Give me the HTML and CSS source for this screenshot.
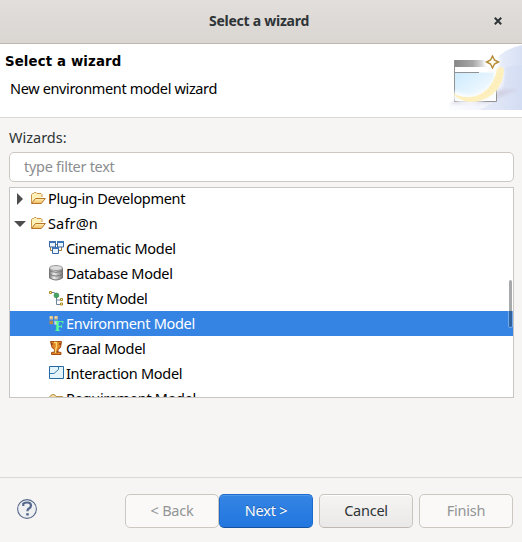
FILE: index.html
```html
<!DOCTYPE html>
<html lang="en">
<head>
<meta charset="utf-8">
<title>Select a wizard</title>
<link rel="stylesheet" href="styles.css">
</head>
<body>
<svg width="0" height="0" class="defs" aria-hidden="true">
  <defs>
    <linearGradient id="gold" x2="0" y2="1"><stop stop-color="#fff3bd"/><stop offset="1" stop-color="#efb957"/></linearGradient>
    <linearGradient id="metal"><stop stop-color="#777"/><stop offset=".35" stop-color="#eee"/><stop offset="1" stop-color="#777"/></linearGradient>
    <linearGradient id="sky" x2="1" y2="1"><stop stop-color="#cceafd"/><stop offset="1" stop-color="#fff"/></linearGradient>
    <symbol id="folder" viewBox="0 0 16 16"><path d="M1.500 13V4.500l1-1h1l1-1H6l1 1h4l1 1v2.500" fill="#fff0b8" stroke="#c9934a"/><path d="M1.500 13.500 5.500 8.500h9.800l-4 5z" fill="url(#gold)" stroke="#b8752a"/></symbol>
  </defs>
</svg>
<div class="window">
  <header class="titlebar"><span class="title">Select a wizard</span>
    <svg class="close" viewBox="0 0 8 8"><path d="M.8.8l6.400 6.400M7.200.8.8 7.200" stroke="#2e3436" stroke-width="2"/></svg>
  </header>
  <section class="banner">
    <div class="banner-text"><h1>Select a wizard</h1><p>New environment model wizard</p></div>
    <svg class="art" viewBox="0 0 75 66">
      <defs>
        <linearGradient id="swoop"><stop stop-color="#fbfcff"/><stop offset=".5" stop-color="#f1f4fc"/><stop offset="1" stop-color="#d6dff4"/></linearGradient>
        <linearGradient id="bar"><stop stop-color="#868686"/><stop offset=".55" stop-color="#a8a8a8"/><stop offset="1" stop-color="#fff"/></linearGradient>
        <filter id="soft" x="-30%" y="-30%" width="160%" height="160%"><feGaussianBlur stdDeviation="1.500"/></filter>
      </defs>
      <path d="M0 58 44 53V19Q54 4 75 1V66H0z" fill="url(#swoop)"/>
      <path d="M54 25Q62 20 75 22V66H30Q62 53 54 25" fill="#ccd8f2" opacity=".35"/>
      <path d="M1 60 8 56 48 46 69 45 38 59z" fill="#cdc9dd" opacity=".7" filter="url(#soft)"/>
      <path d="M5.500 16.500H47.500V57.500H5.500z" fill="#fff"/>
      <path d="M5 16h35v7H5z" fill="url(#bar)"/>
      <path d="M6 28.500h39l2 28H6z" fill="url(#sky)"/>
      <path d="M5.500 16v41.500h42V46M5 28.500h25" fill="none" stroke="#929292"/>
      <path d="M4 50Q15 58 29 54 49 48 51 25" fill="none" stroke="#fff" stroke-width="9" opacity=".8" filter="url(#soft)"/>
      <path d="M3 49Q14 55 27 52 45 45 48 24 52 21 55 25 55 40 44 50 34 58 21 58 10 57 3 49" fill="#fdf0be"/>
      <path d="M33 52Q49 43 51 27" fill="none" stroke="#f5dea0" stroke-dasharray="1 3"/>
      <circle cx="43" cy="18" r="8" fill="#fff" filter="url(#soft)"/>
      <path d="M43.500 12 45.500 16 49.500 18 45.500 20 43.500 24 41.500 20 37.500 18 41.500 16z" fill="#fffbea" stroke="#b58b38" stroke-width="1.400"/>
    </svg>
  </section>
  <main>
    <label for="filter">Wizards:</label>
    <input id="filter" placeholder="type filter text">
    <div class="list">
      <div class="tree">
        <div class="row"><svg class="arrow" viewBox="0 0 12 12"><path d="M3 0 9 6 3 12z"/></svg><svg class="icon"><use href="#folder"/></svg><span>Plug-in Development</span></div>
        <div class="row"><svg class="arrow" viewBox="0 0 12 12"><path d="M0 3H12L6 9z"/></svg><svg class="icon"><use href="#folder"/></svg><span class="loose">Safr@n</span></div>
        <div class="row child"><svg class="icon" viewBox="0 0 16 16"><path d="M8 4.500h1M2.500 7v3.500H5M11 10.500h2.500V7" fill="none" stroke="#a77d35"/><g fill="#e8f4ff" stroke="#36659f"><path d="M1.500 1.500h6v5.500h-6zM9.500 1.500h6v5.500h-6zM4.500 7.500h6v6h-6z"/></g><path d="M1 1h7v2H1zM9 1h7v2H9zM4 7h7v2H4z" fill="#3f75b5"/></svg><span>Cinematic Model</span></div>
        <div class="row child"><svg class="icon" viewBox="0 0 16 16"><path d="M1.500 3v10q6.500 4 13 0V3" fill="url(#metal)" stroke="#777"/><path d="M1.500 5.500q6.500 3.500 13 0M1.500 9.300q6.500 3.500 13 0" fill="none" stroke="#777"/><ellipse cx="8" cy="3" rx="6.500" ry="2.500" fill="#ddd" stroke="#999"/></svg><span>Database Model</span></div>
        <div class="row child"><svg class="icon" viewBox="0 0 16 16"><path d="M4 2.500h2.500l1 2M8.500 6V14.500h3.500M8.500 10h3.500" fill="none" stroke="#71859a"/><circle cx="8.400" cy="5.400" r="2.400" fill="#42a563" stroke="#267d49" stroke-width=".6"/><path d="M1.500 1.500h2v2h-2zM12.500 8.500h2v2h-2zM12.500 13h2v2h-2z" fill="#fff8c8" stroke="#b28a24"/></svg><span>Entity Model</span></div>
        <div class="row child selected"><svg class="icon" viewBox="0 0 16 16"><path d="M1.500 1h3.500v3.500H1.500zM6.300 1h3.500v3.500H6.300z" fill="#d8bd8c"/><path d="M1.500 5.700h3.500v3.500H1.500z" fill="#bd8744"/><path d="M6.300 5.700h3.500v4H6.300z" fill="#c6d5e8"/><path d="M2.300 1.800h1.200V3H2.300zM7.200 1.800h1.200V3H7.200z" fill="#fff4cb"/><text x="6.700" y="15.800" class="f">F</text></svg><span>Environment Model</span></div>
        <div class="row child"><svg class="icon" viewBox="0 0 16 16"><path d="M2.500 1.500h11l-1 6-2.500 2v2.500l3 .5v2H3.500v-2l3-.5V9.500l-2.500-2z" fill="#df8427" stroke="#a54c12"/><path d="M3 4h2M11 4h2M6 12h4" stroke="#642c10"/><path d="M6 2.500h2.500V7L7.500 10v3" fill="none" stroke="#ffd86b" stroke-width="1.500"/></svg><span>Graal Model</span></div>
        <div class="row child"><svg class="icon" viewBox="0 0 16 16"><path d="M1.500 1.500h14v12h-14z" fill="#e5f3fb" stroke="#246ba5"/><path d="M2 8.500h4l4.500-4V2" fill="none" stroke="#3b7caf"/></svg><span>Interaction Model</span></div>
        <div class="row child"><svg class="icon" viewBox="0 0 16 16"><path d="M1.500 7.500q1-3 3.500-3T8 6.500h6.500v3h-13z" fill="#f5dda0" stroke="#b59143"/></svg><span>Requirement Model</span></div>
      </div>
      <div class="thumb"></div>
    </div>
  </main>
  <footer>
    <svg class="help" viewBox="0 0 20 20"><circle cx="10" cy="10" r="9.400" fill="#eff0f2" stroke="#586b8c" stroke-width="1.100"/><path d="M6.300 7.100V4.700Q8 3.400 10.300 3.500 14 3.600 14 6.600q0 1.800-2 2.900-1.600.9-1.600 2.700" fill="none" stroke="#54678c" stroke-width="2.200"/><path d="M9.200 14.200h2.600v2.300H9.200z" fill="#54678c"/></svg>
    <div class="buttons">
      <div class="pair"><button disabled>&lt; Back</button><button class="primary">Next &gt;</button></div>
      <button>Cancel</button><button disabled>Finish</button>
    </div>
  </footer>
</div>
</body>
</html>
```
FILE: styles.css
```css
* { box-sizing: border-box; }
body { margin: 0; background: #f6f5f4; color: #2e3436; font: 14.5px/20px "Noto Sans", sans-serif; }
.defs { position: absolute; }
.window { width: 522px; height: 542px; display: flex; flex-direction: column; overflow: hidden; }
.titlebar { height: 44px; display: grid; grid-template-columns: 1fr auto 1fr; align-items: center; padding: 0 20px 2px; background: linear-gradient(#e1dedb, #dad6d2); border-bottom: 1px solid #bfb8b1; }
.title { grid-column: 2; font-size: 14px; font-weight: 700; letter-spacing: -.25px; margin-left: -4px; }
.close { width: 8px; height: 8px; justify-self: end; }
.banner { height: 74px; display: flex; justify-content: space-between; background: #fff; border-bottom: 1px solid #d9d9d8; color: #000; }
.banner-text { padding: 8px 0 0 5px; }
h1 { margin: 0; font: bold 13.3px/20px "DejaVu Sans", sans-serif; letter-spacing: .14px; }
.banner p { margin: 6px 0 0 5px; letter-spacing: -.36px; }
.art { width: 75px; height: 66px; margin-right: -2px; }
main { height: 359px; padding: 9px 8px 0 9px; }
label { display: block; height: 25px; }
input { display: block; width: 505px; height: 30px; border: 1px solid #cdc7c2; border-radius: 5px; padding: 0 14px 2px; font: inherit; letter-spacing: -.29px; outline: 0; }
input::placeholder { color: #8b8e8f; opacity: 1; }
.list { position: relative; width: 505px; height: 211px; margin-top: 5px; border: 1px solid #c8c6c2; background: #fff; overflow: hidden; color: #000; }
.tree { margin-top: -2px; }
.row { height: 25px; display: flex; align-items: center; padding: 0 0 1px 4px; white-space: pre; letter-spacing: -.3px; }
.row.child { padding-left: 38px; }
.loose { letter-spacing: .15px; }
.selected { background: #3584e4; color: #fff; }
.arrow { width: 12px; height: 12px; fill: #4d4d4d; margin: 1px 4px 0 0; }
.icon { width: 16px; height: 16px; margin-right: 2px; flex: none; }
.f { font: bold 15px "Liberation Serif", serif; letter-spacing: 0; fill: #56ff94; }
.thumb { position: absolute; right: 1px; top: 92px; width: 3px; height: 47px; border-radius: 2px; background: rgba(46,52,54,.42); box-shadow: 0 0 0 1px rgba(255,255,255,.3); }
footer { height: 65px; border-top: 1px solid #d9d9d8; padding: 16px 9px 0 17px; display: flex; justify-content: space-between; }
.help { width: 20px; height: 20px; margin-top: 5px; }
.buttons { display: flex; gap: 6px; }
.pair { display: flex; }
button { width: 94px; height: 34px; padding: 0 0 2px; border: 1px solid #c9c4be; border-bottom-color: #bfb8b1; border-radius: 5px; background: linear-gradient(#f5f4f3, #ebe9e7); box-shadow: inset 0 1px #fff; color: #2e3436; font: inherit; letter-spacing: -.25px; }
button:disabled { background: #faf9f8; border-color: #cdc7c2; color: #929595; box-shadow: none; }
button.primary { background: linear-gradient(#3584e4, #2177df); border-color: #1b6acb; border-bottom-color: #15539e; color: #fff; box-shadow: inset 0 1px #5397e8; text-shadow: 0 -1px rgba(0,0,0,.3); }
```
